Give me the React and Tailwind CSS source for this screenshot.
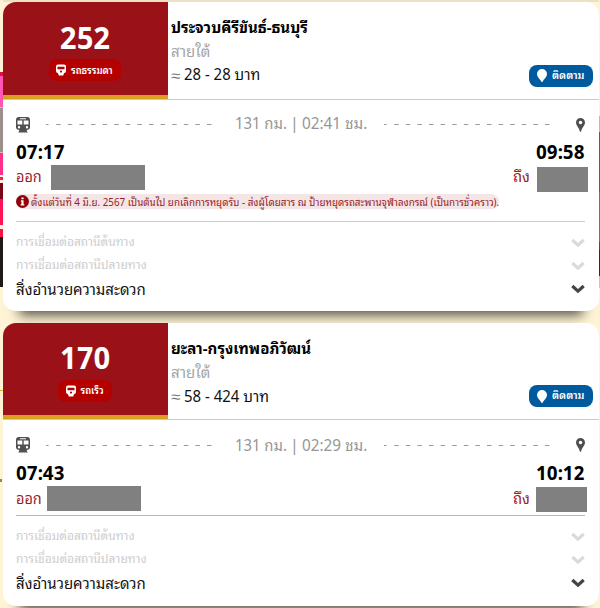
import React from "react";

const trips = [
  {
    no: "252", type: "รถธรรมดา", badgeW: "w-[72px]", name: "ประจวบคีรีขันธ์-ธนบุรี", nameW: 137, price: "28 - 28 บาท", priceW: 76,
    distance: "131 กม.", duration: "02:41 ชม.", dep: "07:17", arr: "09:58", fromGap: "ml-[9px]", endGap: "w-[75px]",
    notice: "ตั้งแต่วันที่ 4 มิ.ย. 2567 เป็นต้นไป ยกเลิกการหยุดรับ - ส่งผู้โดยสาร ณ ป้ายหยุดรถสะพานจุฬาลงกรณ์ (เป็นการชั่วคราว).",
  },
  {
    no: "170", type: "รถเร็ว", badgeW: "w-[54px]", name: "ยะลา-กรุงเทพอภิวัฒน์", nameW: 140, price: "58 - 424 บาท", priceW: 85,
    distance: "131 กม.", duration: "02:29 ชม.", dep: "07:43", arr: "10:12", fromGap: "ml-[5px]", endGap: "w-[74px]",
  },
];

/* Single line of text set to a fixed measured width. */
function Line({ w, size, children, className = "" }) {
  const ref = React.useRef(null);
  const [k, setK] = React.useState(1);
  React.useLayoutEffect(() => {
    const fit = () => {
      if (ref.current) setK(w / ref.current.offsetWidth);
    };
    fit();
    document.fonts.ready.then(fit);
  }, [w]);
  return (
    <span className={`flex shrink-0 whitespace-nowrap ${className}`} style={{ width: w, fontSize: size }}>
      <span ref={ref} className="inline-block shrink-0 origin-left" style={{ transform: `scaleX(${k})` }}>{children}</span>
    </span>
  );
}

function TramBadgeIcon() {
  return (
    <svg viewBox="0 0 10 12" className="h-3 w-2.5 shrink-0" fill="white">
      <path fillRule="evenodd" d="M2 .5h6a2 2 0 0 1 2 2V7a2.2 2.2 0 0 1-2 2.2L7.2 11.500H2.800L2 9.200A2.200 2.200 0 0 1 0 7V2.500a2 2 0 0 1 2-2ZM1.500 2.800v2.400h7V2.800ZM5 6.500a1.100 1.100 0 1 0 0 2.200 1.100 1.100 0 0 0 0-2.200Z" />
    </svg>
  );
}

function TrainIcon() {
  return (
    <svg viewBox="0 0 14 16" className="h-4 w-3.5 shrink-0" fill="#505050">
      <path fillRule="evenodd" d="M3 0h8a3 3 0 0 1 3 3v7.500a2.500 2.500 0 0 1-2 2.300l-1.500.200 1.200 2.500H2.300l1.200-2.500L2 12.800a2.500 2.500 0 0 1-2-2.300V3a3 3 0 0 1 3-3ZM1.500 3.500v4h4.800v-4Zm6.200 0v4h4.800v-4ZM4 1.200v1h6v-1ZM3 9a1.200 1.200 0 1 0 0 2.400A1.200 1.200 0 0 0 3 9Zm8 0a1.200 1.200 0 1 0 0 2.400A1.200 1.200 0 0 0 11 9Z" />
    </svg>
  );
}

function PinIcon() {
  return (
    <svg viewBox="0 0 9 14" className="h-3.5 w-[9px] shrink-0" fill="#505050">
      <path fillRule="evenodd" d="M4.500 0A4.500 4.500 0 0 1 9 4.500C9 7.500 6.200 9 5.200 13.300Q4.500 14.300 3.800 13.300C2.800 9 0 7.500 0 4.500A4.500 4.500 0 0 1 4.500 0Zm0 2.700a1.800 1.800 0 1 0 0 3.600 1.800 1.800 0 0 0 0-3.600Z" />
    </svg>
  );
}

function Dashes() {
  return (
    <svg className="h-px w-[166px] shrink-0" viewBox="0 0 166 1">
      <path d="M0 .5h2.500" stroke="#999" />
      <path d="M10.200 .5H166" stroke="#999" strokeDasharray="4.500 7.100" />
    </svg>
  );
}

function Chevron({ color }) {
  return (
    <svg viewBox="0 0 14 10" className="h-2.5 w-3.5 shrink-0" fill="none">
      <path d="m1.300 2 5.700 5.200 5.700-5.200" stroke={color} strokeWidth="3.200" />
    </svg>
  );
}

function Connection({ w, children }) {
  return (
    <div className="flex h-[23px] items-center justify-between">
      <Line w={w} size={12.5} className="pb-[2px]">{children}</Line>
      <div className="pt-[3px]"><Chevron color="#dadada" /></div>
    </div>
  );
}

function Trip({ t }) {
  return (
    <article className={`relative shrink-0 overflow-hidden rounded-[13px] bg-white shadow-[0_20px_12px_-16px_rgba(0,0,0,0.7)] ${t.notice ? "h-[309px]" : "h-[283px]"}`}>
      <header className="flex h-[97.5px] border-b-[1.5px] border-[#cacaca]">
        <div className="flex h-[96.5px] w-[165px] shrink-0 flex-col items-center border-b-4 border-[#d9a020] bg-[#9b1118] pr-[2px] pt-[17px] text-white">
          <div className="flex h-8 items-center font-bold"><Line w={50} size={30}>{t.no}</Line></div>
          <div className={`mt-[8px] flex h-[22px] items-center justify-center gap-[5px] rounded-lg bg-[#b50000] font-semibold ${t.badgeW}`}>
            <TramBadgeIcon />
            <Line w={t.notice ? 42 : 23} size={9.5}>{t.type}</Line>
          </div>
        </div>
        <div className={`flex min-w-0 flex-1 flex-col pl-[3px] ${t.notice ? "pt-[12px]" : "pt-[13px]"}`}>
          <div className="flex h-6 items-center font-bold text-black"><Line w={t.nameW} size={15}>{t.name}</Line></div>
          <div className="flex h-6 items-center text-[#a5a5a5]"><Line w={39} size={15}>สายใต้</Line></div>
          <div className="flex h-6 items-center gap-[4px] text-[#111]">
            <Line w={9} size={15} className="text-[#777]">≈</Line>
            <Line w={t.priceW} size={15.5}>{t.price}</Line>
          </div>
        </div>
        <div className="flex items-end pb-[12px] pr-[5.5px]">
          <button className="flex h-[22px] w-[64px] items-center gap-[5px] rounded-lg bg-[#005a9e] pl-[8px] font-semibold text-white">
            <svg viewBox="0 0 10 13" className="h-[13px] w-2.5 shrink-0"><path d="M5 0a5 5 0 0 1 5 5c0 3-3 5-4.300 7.400q-.700 1-1.400 0C3 10 0 8 0 5a5 5 0 0 1 5-5Z" fill="white" /></svg>
            <Line w={33} size={11} className="pb-[3px]">ติดตาม</Line>
          </button>
        </div>
      </header>
      <div className="pl-[13px] pr-[13.5px] pt-[12px]">
        <div className="flex h-[26px] items-center text-[#969696]">
          <TrainIcon />
          <div className="ml-4 flex"><Dashes /></div>
          <div className={`ml-[23px] flex gap-[3px] ${t.notice ? "pb-[5px]" : "pb-[3px]"}`}>
            <Line w={52} size={16}>{t.distance}</Line>
            <span className="w-[9px] text-center text-base">|</span>
            <Line w={65} size={16}>{t.duration}</Line>
          </div>
          <div className="ml-[17px] flex"><Dashes /></div>
          <div className="ml-auto flex"><PinIcon /></div>
        </div>
        <div className="flex h-[26px] items-center justify-between font-bold text-black">
          <Line w={49} size={19} className="leading-none">{t.dep}</Line>
          <Line w={49} size={19} className="leading-none">{t.arr}</Line>
        </div>
        <div className="-mr-[3px] flex h-[27px] items-center justify-between text-[#982127]">
          <div className="flex items-center">
            <Line w={26} size={15} className={`leading-tight ${t.notice ? "pb-[4px]" : "pb-[1px]"}`}>ออก</Line>
            <div className={`h-[25px] w-[94px] bg-[#808080] ${t.fromGap} ${t.notice ? "" : "mt-[2px]"}`} />
          </div>
          <div className={`flex items-center justify-between ${t.notice ? "" : "mr-px"} ${t.endGap}`}>
            <Line w={17} size={15} className={`leading-tight ${t.notice ? "pb-[4px]" : "pb-[1px]"}`}>ถึง</Line>
            <div className="mt-[4px] h-[25px] w-[51px] bg-[#808080]" />
          </div>
        </div>
        {t.notice && (
          <div className="mt-[3px] flex h-[15px] w-[483px] items-center gap-[2px] rounded-full bg-[#f5e6e6] text-[#982127]">
            <svg viewBox="0 0 12 12" className="size-[13px] shrink-0"><circle cx="6" cy="6" r="6" fill="#920008" /><path d="M5 2.200h2v1.700H5ZM4.500 4.900H7v3.600h.700v1.200H4.300V8.500H5V6.100h-.500Z" fill="white" /></svg>
            <Line w={468} size={11}>{t.notice}</Line>
          </div>
        )}
        <div className={`border-t-[1.5px] ${t.notice ? "mt-[12px] border-[#cfcfcf]" : "mt-[4px] border-[#b8b8b8]"}`} />
        <div className="flex flex-col pt-[8px] text-[#cdcdcd]">
          <Connection w={119}>การเชื่อมต่อสถานีต้นทาง</Connection>
          <Connection w={131}>การเชื่อมต่อสถานีปลายทาง</Connection>
          <div className="flex h-[26px] items-center justify-between text-[#111]">
            <Line w={130} size={15} className="pb-px">สิ่งอำนวยความสะดวก</Line>
            <Chevron color="#454545" />
          </div>
        </div>
      </div>
    </article>
  );
}

/* Slivers of the page backdrop that show on both sides of the cards. */
function LeftEdge() {
  return (
    <div className="flex w-[3px] shrink-0 flex-col">
      <div className="h-[72px]" />
      <div className="h-1 bg-[#e0103c]" />
      <div className="h-[31px] bg-[#ff55b4]" />
      <div className="h-[46px] border-y border-[#e0b8b8] bg-[#9c8f8c]" />
      <div className="h-[22px] bg-[#ff2f8c]" />
      <div className="h-[2px] bg-[#fff0d8]" />
      <div className="h-[3px] bg-[#f0205c]" />
      <div className="h-[3px] bg-[#fff0d8]" />
      <div className="h-[16px] bg-[#7a0618]" />
      <div className="h-[26px] bg-[#ff1458]" />
      <div className="h-1 bg-[#fff0d8]" />
      <div className="h-[8px] bg-[#ff1048]" />
      <div className="h-[50px] bg-[#1e1a18]" />
      <div className="h-[103px]" />
      <div className="h-px bg-[#f5a623]" />
      <div className="h-[88px]" />
      <div className="h-[3px] w-[2px] bg-[#8a8470]" />
    </div>
  );
}

function RightEdge() {
  return (
    <div className="flex w-[1.5px] shrink-0 flex-col">
      <div className="h-[116px]" />
      <div className="h-4 bg-[#7fd8c0]" />
      <div className="h-[60px] bg-[#2c7088]" />
      <div className="h-[50px] bg-[#3f7fb8]" />
      <div className="h-2 bg-[#b02028]" />
      <div className="h-[26px] bg-[#4a2028]" />
      <div className="h-3 bg-[#bcc6d6]" />
    </div>
  );
}

export default function App() {
  return (
    <main className="flex h-[608px] w-[600px] overflow-hidden bg-[#fff5d6] font-['Noto_Sans_Thai_Looped','Noto_Sans_Thai','Noto_Sans',sans-serif]">
      <LeftEdge />
      <div className="flex w-[595.5px] shrink-0 flex-col gap-[11.5px] border-t-2 border-[#ebe2c6]">
        <Trip t={trips[0]} />
        <Trip t={trips[1]} />
      </div>
      <RightEdge />
    </main>
  );
}
